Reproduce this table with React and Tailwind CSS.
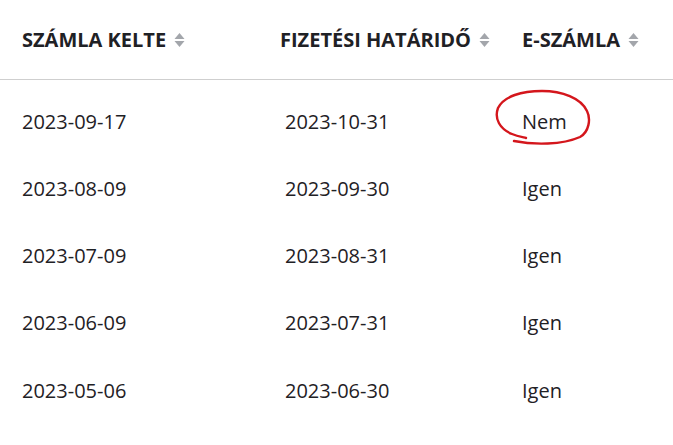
import React from "react";

const rows = [
  ["2023-09-17", "2023-10-31", "Nem"],
  ["2023-08-09", "2023-09-30", "Igen"],
  ["2023-07-09", "2023-08-31", "Igen"],
  ["2023-06-09", "2023-07-31", "Igen"],
  ["2023-05-06", "2023-06-30", "Igen"],
];

function SortIcon() {
  return (
    <svg width="11" height="16" viewBox="0 0 11 16" className="ml-[8px] shrink-0">
      <path d="M5.5 1 L10.5 7 L0.5 7 Z" fill="#a3a6ab" />
      <path d="M0.5 9 L10.5 9 L5.5 15 Z" fill="#a3a6ab" />
    </svg>
  );
}

function Circle() {
  return (
    <svg
      width="104"
      height="62"
      viewBox="0 0 104 62"
      className="absolute left-[-30px] top-0 pointer-events-none"
    >
      <path
        d="M22 53 C42 57 70 57 88 49 C97 44 99 31 95 23 C89 10 70 3 50 3 C30 3 12 8 6 20 C2 31 8 41 20 46 C25 48 30 49 34 50"
        fill="none"
        stroke="#d4161c"
        strokeWidth="2.4"
        strokeLinecap="round"
      />
    </svg>
  );
}

export default function App() {
  return (
    <div
      className="w-[673px] h-[445px] bg-white overflow-hidden text-[#1f2125]"
      style={{ fontFamily: '"Open Sans", sans-serif' }}
    >
      <div className="grid grid-cols-[258px_242px_1fr] h-[79px] items-center pl-[22px] border-b border-[#cfcfcf] box-content">
        <div className="flex items-center text-[20px] font-bold">
          SZÁMLA KELTE <SortIcon />
        </div>
        <div className="flex items-center text-[20px] font-bold">
          FIZETÉSI HATÁRIDŐ <SortIcon />
        </div>
        <div className="flex items-center text-[20px] font-bold">
          E-SZÁMLA <SortIcon />
        </div>
      </div>
      <div className="pt-[8px]">
        {rows.map((r, i) => (
          <div
            key={i}
            className="grid grid-cols-[258px_242px_1fr] h-[67.25px] items-center pl-[22px] text-[20px]"
          >
            <div>{r[0]}</div>
            <div className="pl-[5px]">{r[1]}</div>
            <div className="relative h-full flex items-center">
              {i === 0 && <Circle />}
              <span className="relative">{r[2]}</span>
            </div>
          </div>
        ))}
      </div>
    </div>
  );
}
